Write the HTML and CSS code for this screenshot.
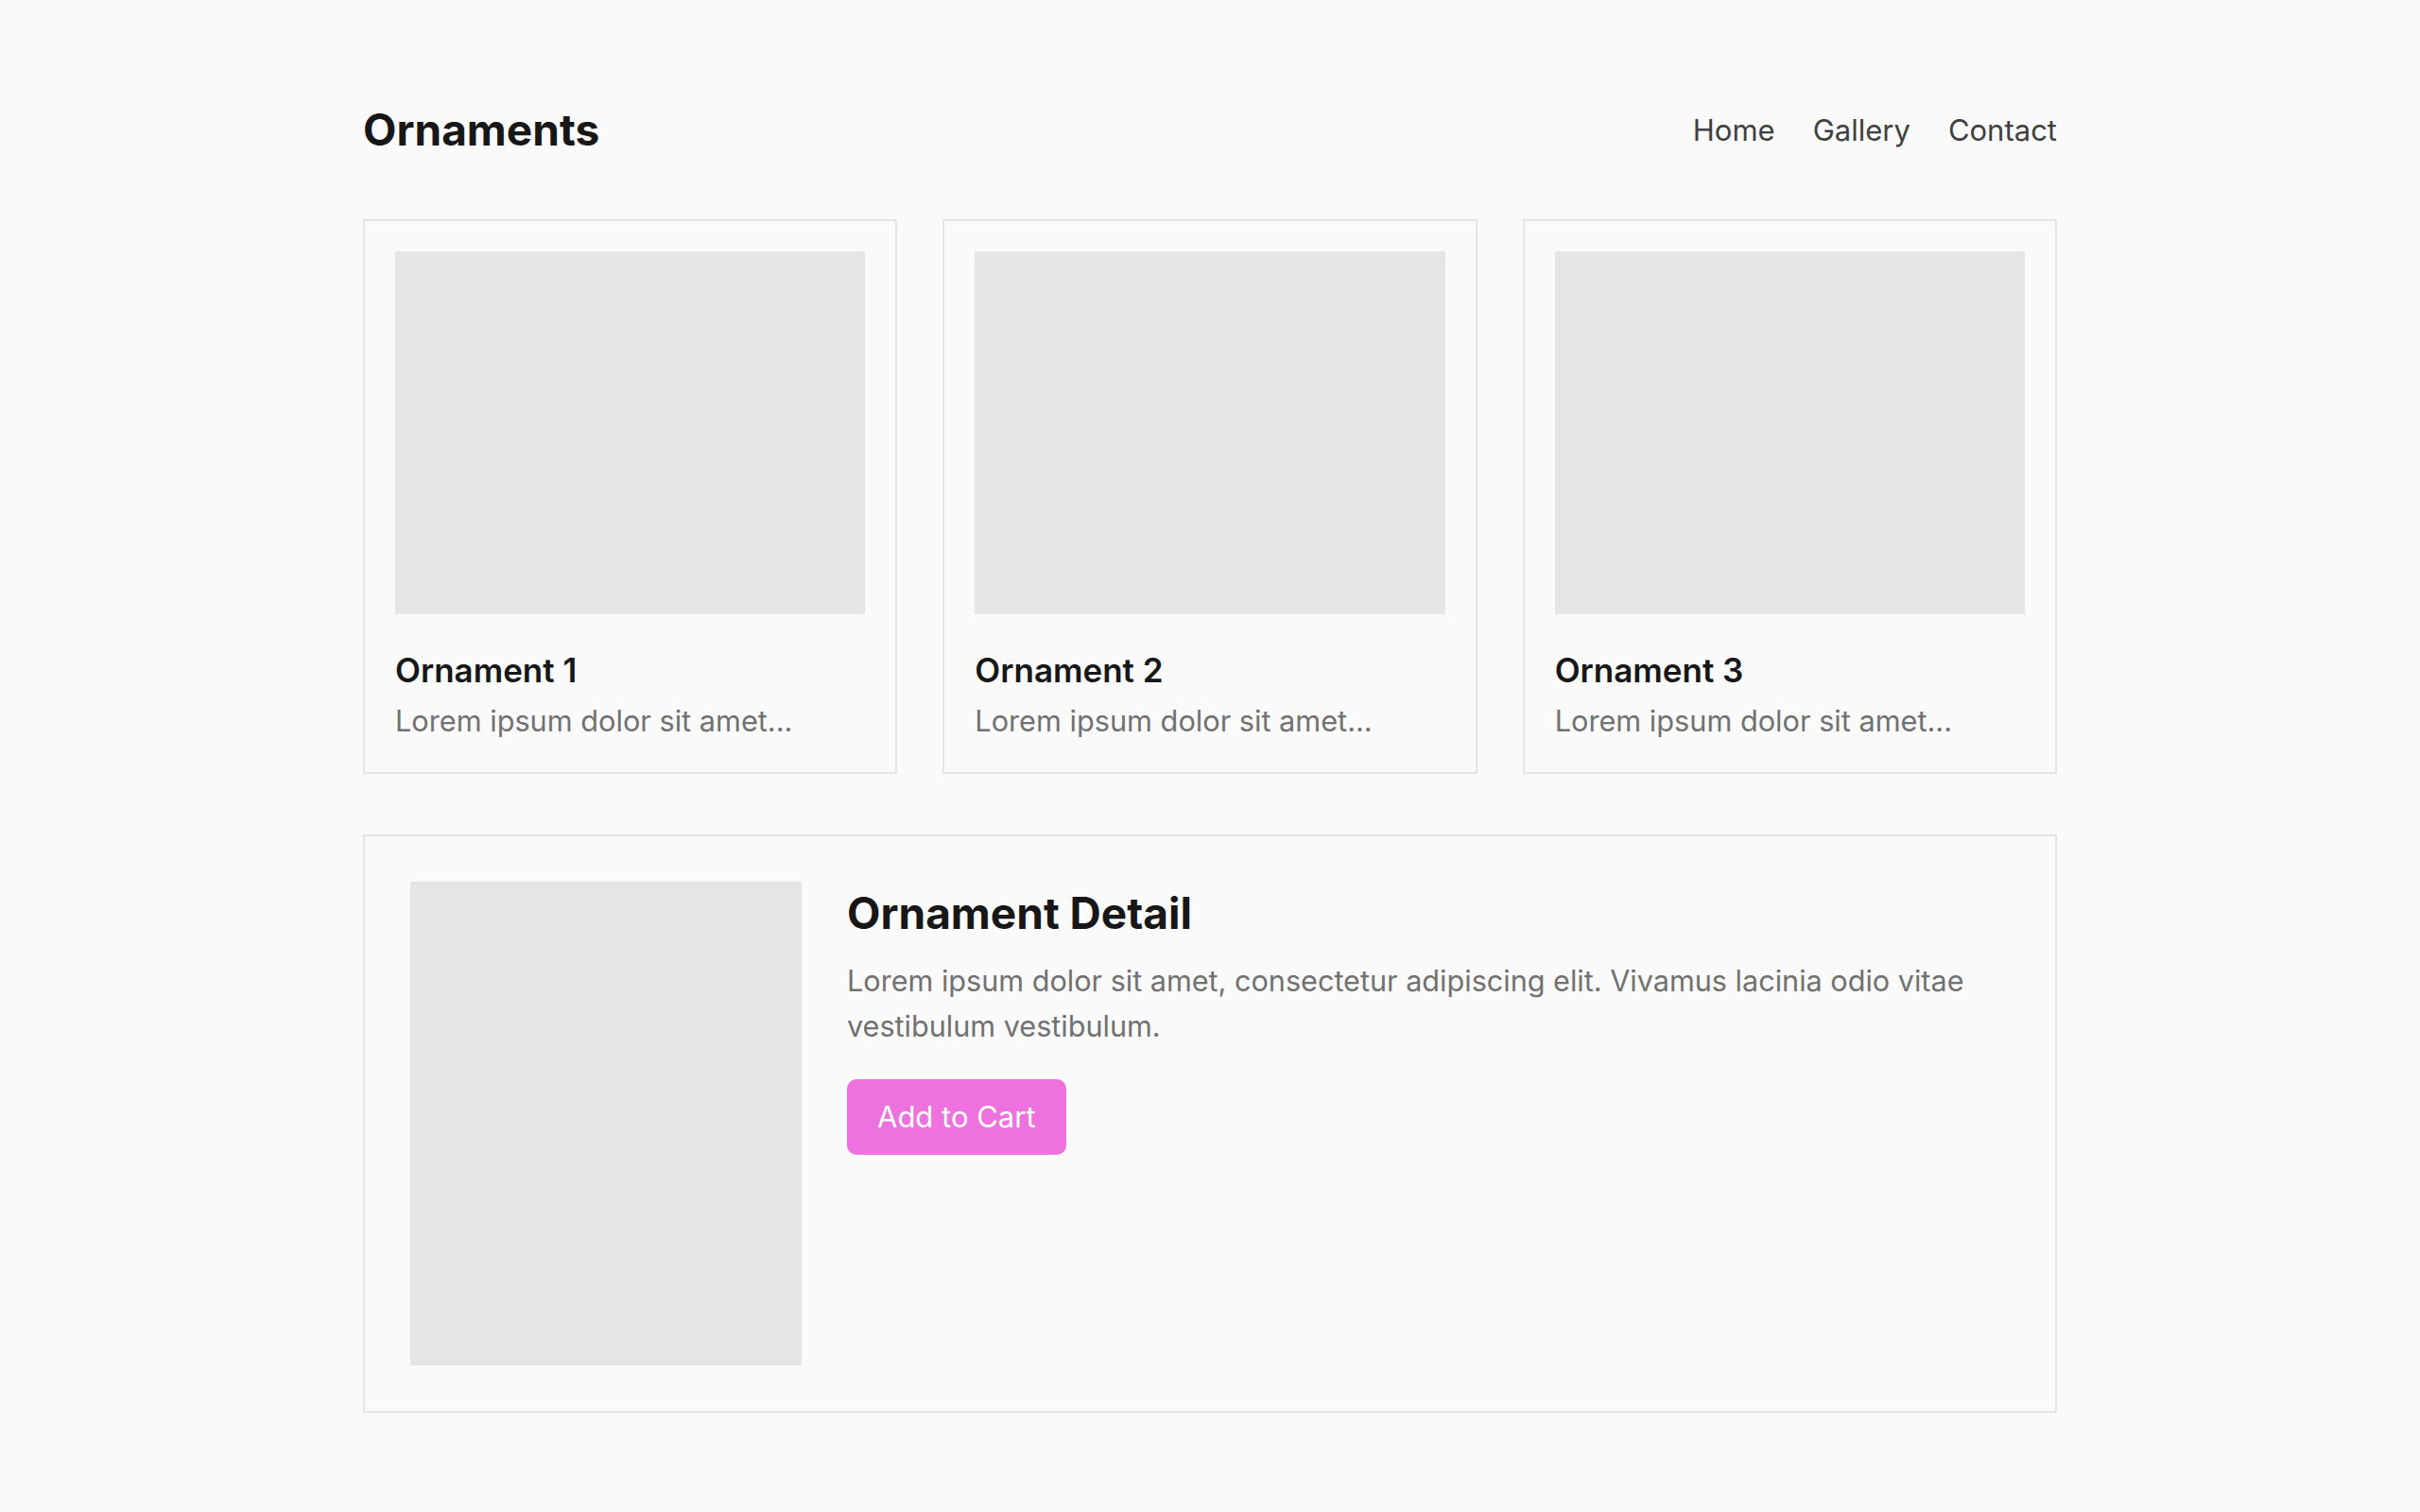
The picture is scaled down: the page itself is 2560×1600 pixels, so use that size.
FILE: index.html
```
<!DOCTYPE html>
<html>
<head>
    <title>Ornaments</title>
    <link rel="stylesheet" href="styles.css">
</head>
<body>
    <div class="container">
        <header class="header">
            <h1>Ornaments</h1>
            <nav class="nav">
                <a href="#">Home</a>
                <a href="#">Gallery</a>
                <a href="#">Contact</a>
            </nav>
        </header>

        <section class="gallery">
            <div class="card">
                <div class="card-image"></div>
                <h3>Ornament 1</h3>
                <p>Lorem ipsum dolor sit amet...</p>
            </div>
            <div class="card">
                <div class="card-image"></div>
                <h3>Ornament 2</h3>
                <p>Lorem ipsum dolor sit amet...</p>
            </div>
            <div class="card">
                <div class="card-image"></div>
                <h3>Ornament 3</h3>
                <p>Lorem ipsum dolor sit amet...</p>
            </div>
        </section>

        <section class="detail">
            <div class="detail-image"></div>
            <div class="detail-info">
                <h2>Ornament Detail</h2>
                <p>Lorem ipsum dolor sit amet, consectetur adipiscing elit. Vivamus lacinia odio vitae vestibulum vestibulum.</p>
                <button class="cart-button">Add to Cart</button>
            </div>
        </section>
    </div>
</body>
</html>
```

FILE: styles.css
```
body {
    margin: 0;
    background-color: #fafafa;
    color: #171717;
    font-family: Inter, "Noto Sans", sans-serif;
}

.container {
    width: 1792px;
    margin: 0 auto;
    padding-top: 108px;
}

.header {
    display: flex;
    justify-content: space-between;
    align-items: center;
    margin-bottom: 66px;
}

.header h1 {
    margin: 0;
    font-size: 46px;
    font-weight: 700;
    line-height: 58px;
}

.nav {
    display: flex;
    gap: 40px;
}

.nav a {
    color: #404040;
    font-size: 31px;
    text-decoration: none;
}

.gallery {
    display: grid;
    grid-template-columns: repeat(3, 1fr);
    gap: 48px;
}

.card {
    padding: 32px;
    border: 2px solid #e5e5e5;
}

.card-image {
    height: 384px;
    margin-bottom: 38px;
    background: #e5e5e5;
}

.card h3 {
    margin: 0 0 10px;
    font-size: 35px;
    font-weight: 600;
    line-height: 42px;
}

.card p {
    margin: 0;
    color: #717171;
    font-size: 30.7px;
    line-height: 45px;
}

.detail {
    display: grid;
    grid-template-columns: 414px 1fr;
    gap: 48px;
    margin-top: 64px;
    padding: 48px;
    border: 2px solid #e5e5e5;
}

.detail-image {
    height: 512px;
    background: #e5e5e5;
}

.detail-info h2 {
    margin: 6px 0 20px;
    font-size: 46px;
    font-weight: 700;
    line-height: 1.2;
}

.detail-info p {
    margin: 0 0 32px;
    color: #717171;
    font-size: 30.6px;
    line-height: 48px;
}

.cart-button {
    padding: 16px 32px;
    border: none;
    border-radius: 10px;
    background: #ed72dd;
    color: #fff;
    font-family: Inter, "Noto Sans", sans-serif;
    font-size: 31px;
    line-height: 48px;
    cursor: pointer;
}
```
